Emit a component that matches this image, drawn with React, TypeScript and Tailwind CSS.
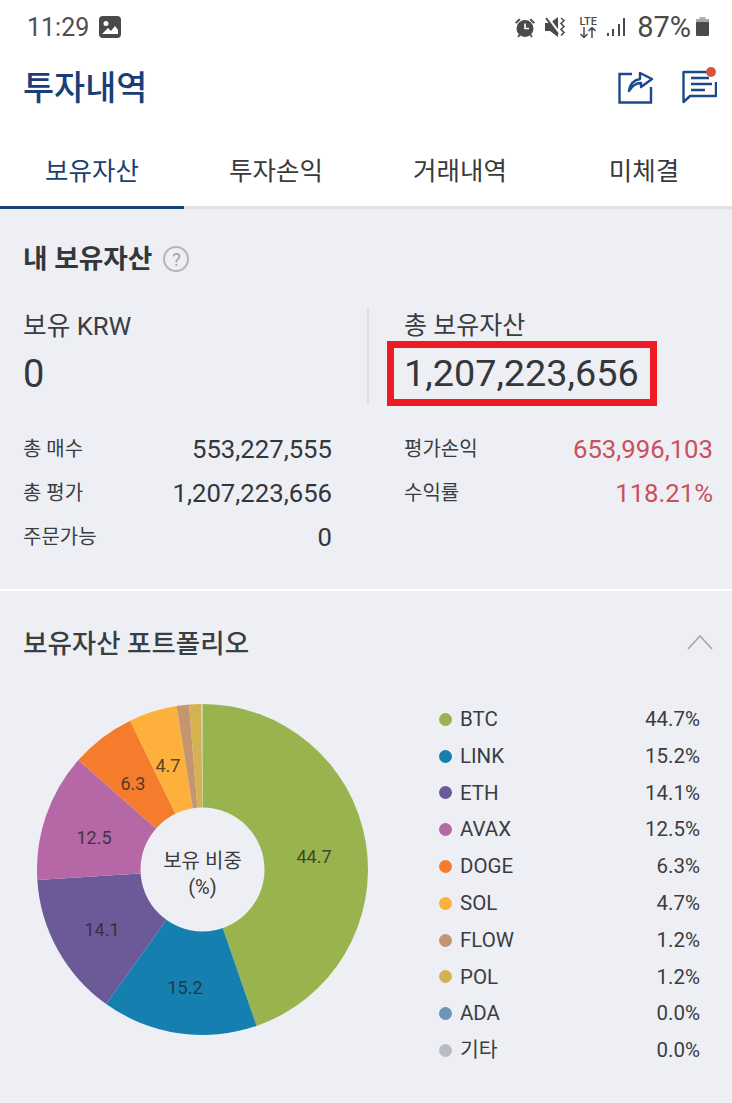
const FONT = { fontFamily: "Roboto, 'Noto Sans CJK KR', sans-serif" };

const slices = [
  { name: "BTC", value: 44.7, color: "#99b44e", lx: 277, ly: 152 },
  { name: "LINK", value: 15.2, color: "#1580b0", lx: 148, ly: 283 },
  { name: "ETH", value: 14.1, color: "#6c5a98", lx: 65, ly: 225 },
  { name: "AVAX", value: 12.5, color: "#b568a5", lx: 57, ly: 133 },
  { name: "DOGE", value: 6.3, color: "#f57c2c", lx: 96, ly: 79 },
  { name: "SOL", value: 4.7, color: "#fdb03c", lx: 131, ly: 61 },
  { name: "FLOW", value: 1.2, color: "#c49670", lx: 0, ly: 0 },
  { name: "POL", value: 1.2, color: "#d4b252", lx: 0, ly: 0 },
  { name: "ADA", value: 0, color: "#6b96b8", lx: 0, ly: 0 },
  { name: "기타", value: 0, color: "#b9bcc4", lx: 0, ly: 0 },
];

const CX = 165.5;
const CY = 165.5;
const R = 165.5;

function point(angle: number, r: number) {
  const a = (angle * Math.PI) / 180;
  return [CX + r * Math.sin(a), CY - r * Math.cos(a)];
}

function wedge(start: number, end: number) {
  const [x1, y1] = point(start, R);
  const [x2, y2] = point(end, R);
  const large = end - start > 180 ? 1 : 0;
  return `M${CX} ${CY}L${x1} ${y1}A${R} ${R} 0 ${large} 1 ${x2} ${y2}Z`;
}

function PieChart() {
  let acc = 0;
  return (
    <svg width="331" height="331" viewBox="0 0 331 331" className="shrink-0">
      {slices
        .filter((s) => s.value > 0)
        .map((s) => {
          const start = (acc / 100) * 360;
          acc += s.value;
          const end = (acc / 100) * 360;
          return <path key={s.name} d={wedge(start, end)} fill={s.color} />;
        })}
      {slices
        .filter((s) => s.value > 2)
        .map((s) => (
          <text
            key={s.name}
            x={s.lx}
            y={s.ly}
            textAnchor="middle"
            dominantBaseline="central"
            fontSize="18"
            fill="#222"
            opacity="0.75"
          >
            {s.value.toFixed(1)}
          </text>
        ))}
      <circle cx={CX} cy={CY} r="62" fill="#eeeff5" />
      <text x={CX} y="157" textAnchor="middle" dominantBaseline="central" fontSize="20" fill="#3a3a3a">
        보유 비중
      </text>
      <text x={CX} y="183" textAnchor="middle" dominantBaseline="central" fontSize="20" fill="#3a3a3a">
        (%)
      </text>
    </svg>
  );
}

function StatusIcons() {
  return (
    <div className="flex items-center">
      {/* alarm */}
      <svg width="22" height="23" viewBox="0 0 22 22" fill="#4a4a4a">
        <circle cx="11" cy="12" r="8.5" />
        <path d="M1 6l4-4 1.5 1.2-4 4zM21 6l-4-4-1.5 1.2 4 4zM4.5 18l2 1-2 2-1-1zM17.5 18l-2 1 2 2 1-1z" />
        <path d="M11 7v5h4" stroke="#fff" strokeWidth="1.6" fill="none" />
      </svg>
      {/* mute vibrate */}
      <svg width="21" height="22" viewBox="0 0 21 22" className="ml-[9px]" fill="#4a4a4a">
        <path d="M0 7h5l8-6v20l-8-6H0z" />
        <path d="M2 1l12 16" stroke="#fff" strokeWidth="3" />
        <path d="M1 2l12 16" stroke="#4a4a4a" strokeWidth="2" />
        <path d="M16 2l3 2.5-3 3 3 3-3 3 3 3-3 3" stroke="#4a4a4a" strokeWidth="1.6" fill="none" />
      </svg>
      <div className="ml-[12px] flex w-[20px] flex-col items-center text-[#4a4a4a]">
        <span className="text-[11px] leading-[10px] font-medium">LTE</span>
        <svg width="18" height="11" viewBox="0 0 18 11" fill="none" stroke="#4a4a4a" strokeWidth="1.5">
          <path d="M5 0v10M1.5 7L5 10.5 8.5 7M13 11V1M9.5 4L13 .5 16.5 4" />
        </svg>
      </div>
      {/* signal */}
      <svg width="19" height="20" viewBox="0 0 19 20" className="ml-[9px]" fill="#4a4a4a">
        <rect x="0" y="16" width="2" height="3" />
        <rect x="5" y="12" width="2" height="7" />
        <rect x="11" y="7" width="2" height="12" />
        <rect x="16" y="1" width="2" height="18" />
      </svg>
      <span className="ml-[11px] text-[29px] leading-none text-[#4a4a4a]">87%</span>
      {/* battery */}
      <svg width="15" height="22" viewBox="0 0 15 22" className="ml-[4px]">
        <rect x="4.5" y="1" width="6" height="3" fill="#b0b0b0" />
        <rect x="1" y="3" width="13" height="4" fill="#a8a8a8" />
        <rect x="1" y="6" width="13" height="14" rx="1" fill="#4a4a4a" />
      </svg>
    </div>
  );
}

function StatRow({ label, value, red }: { label: string; value: string; red?: boolean }) {
  return (
    <div className="flex h-[44px] items-center justify-between pt-[1px]">
      <span className="pt-[1px] text-[20px] text-[#3a3d42]">{label}</span>
      <span className={red ? "pt-[1px] text-[25.7px] text-[#c9505c]" : "pt-[1px] text-[25.7px] text-[#33363a]"}>
        {value}
      </span>
    </div>
  );
}

export default function App() {
  return (
    <div className="h-[1103px] w-[732px] overflow-hidden bg-white" style={FONT}>
      {/* Status bar */}
      <div className="flex h-[54px] items-center justify-between pr-[22px] pl-[27px]">
        <div className="flex items-center gap-[10px]">
          <span className="text-[25px] leading-none text-[#4f4f4f]">11:29</span>
          <svg width="22" height="22" viewBox="0 0 22 22">
            <rect width="22" height="22" rx="4" fill="#4a4a4a" />
            <circle cx="7" cy="7.5" r="2.5" fill="#fff" />
            <path d="M3 18l6-6 3 3 4-5 3 4v4z" fill="#fff" />
          </svg>
        </div>
        <StatusIcons />
      </div>

      {/* Header */}
      <div className="flex h-[66px] items-center justify-between pr-[15px] pl-[23px]">
        <h1 className="pt-[4px] text-[33.8px] font-medium text-[#1a3f78]">투자내역</h1>
        <div className="flex items-center gap-[28px]">
          <svg width="36" height="34" viewBox="0 0 36 34" fill="none" stroke="#1a4a8c" strokeWidth="2.4">
            <path d="M14 4H1.5V32.5H33V17" />
            <path d="M11 21C12 14 16 10 22 9V3L34 9 23 17V13C18 13 14 16 11 21Z" strokeLinejoin="round" />
          </svg>
          <div className="relative h-[36px] w-[35px]">
            <svg width="35" height="36" viewBox="0 0 35 36" fill="none" stroke="#1a4a8c" strokeWidth="2.4">
              <path d="M27 3H1.5V33L8 27H34V13" strokeLinejoin="round" />
              <path d="M9 9H27M9 15H30M9 21H23" />
            </svg>
            <span className="absolute top-[-2px] right-[1px] h-[10px] w-[10px] rounded-full bg-[#d4553a]" />
          </div>
        </div>
      </div>

      {/* Tabs */}
      <div className="h-[89px] border-b-[3px] border-[#e0e1e5]">
        <div className="grid h-full w-[736px] grid-cols-4">
          <div className="relative flex items-center justify-center pt-[16px] text-[25.5px] text-[#1a3f78]">
            보유자산
            <span className="absolute right-0 bottom-[-3px] left-0 h-[3px] bg-[#1a3f78]" />
          </div>
          <div className="flex items-center justify-center pt-[16px] text-[25.5px] text-[#3a3a3a]">투자손익</div>
          <div className="flex items-center justify-center pt-[16px] text-[25.5px] text-[#3a3a3a]">거래내역</div>
          <div className="flex items-center justify-center pt-[16px] text-[25.5px] text-[#3a3a3a]">미체결</div>
        </div>
      </div>

      {/* 내 보유자산 */}
      <section className="h-[380px] bg-[#eeeff5] pt-[32px] pr-[19px] pl-[23px]">
        <div className="flex h-[36px] items-center gap-[11px]">
          <h2 className="text-[26.7px] font-bold text-[#33363a]">내 보유자산</h2>
          <span className="flex h-[26px] w-[26px] items-center justify-center rounded-full border-2 border-[#b5b6ba] text-[18px] text-[#a0a1a5]">
            ?
          </span>
        </div>
        <div className="mt-[30px] flex h-[96px]">
          <div className="w-[344px]">
            <p className="mt-[2px] text-[25.7px] leading-[34px] text-[#3a3d42]">보유 KRW</p>
            <p className="mt-[9px] text-[38px] leading-[44px] text-[#33363a]">0</p>
          </div>
          <div className="border-l-2 border-[#dcdde1] pl-[35px]">
            <p className="mt-[2px] text-[25px] leading-[34px] text-[#3a3d42]">총 보유자산</p>
            <p className="relative mt-[8px] text-[37.8px] leading-[44px] whitespace-nowrap text-[#33363a]">
              1,207,223,656
              <span className="absolute top-[-10px] left-[-17px] h-[65px] w-[270px] border-[7px] border-[#ed1c24]" />
            </p>
          </div>
        </div>
        <div className="mt-[23px] flex gap-[72px]">
          <div className="w-[309px]">
            <StatRow label="총 매수" value="553,227,555" />
            <StatRow label="총 평가" value="1,207,223,656" />
            <StatRow label="주문가능" value="0" />
          </div>
          <div className="w-[309px]">
            <StatRow label="평가손익" value="653,996,103" red />
            <StatRow label="수익률" value="118.21%" red />
          </div>
        </div>
      </section>

      {/* 포트폴리오 */}
      <section className="mt-[2px] h-[512px] bg-[#eeeff5] pr-[19px] pl-[23px]">
        <div className="flex h-[102px] items-center justify-between">
          <h2 className="pt-[3px] text-[26.5px] font-medium text-[#3a3d42]">보유자산 포트폴리오</h2>
          <svg width="26" height="16" viewBox="0 0 26 16" fill="none" stroke="#a8a9ad" strokeWidth="1.8">
            <path d="M1 15L13 2l12 13" />
          </svg>
        </div>
        <div className="mt-[11px] flex">
          <div className="ml-[14px]">
            <PieChart />
          </div>
          <ul className="mt-[-3px] ml-[71px] w-[261px]">
            {slices.map((s) => (
              <li key={s.name} className="flex h-[36.8px] items-center">
                <span className="h-[13px] w-[13px] rounded-full" style={{ background: s.color }} />
                <span className="ml-[8px] text-[20.5px] text-[#3a3d42]">{s.name}</span>
                <span className="ml-auto text-[20.5px] text-[#3a3d42]">{s.value.toFixed(1)}%</span>
              </li>
            ))}
          </ul>
        </div>
      </section>
    </div>
  );
}
